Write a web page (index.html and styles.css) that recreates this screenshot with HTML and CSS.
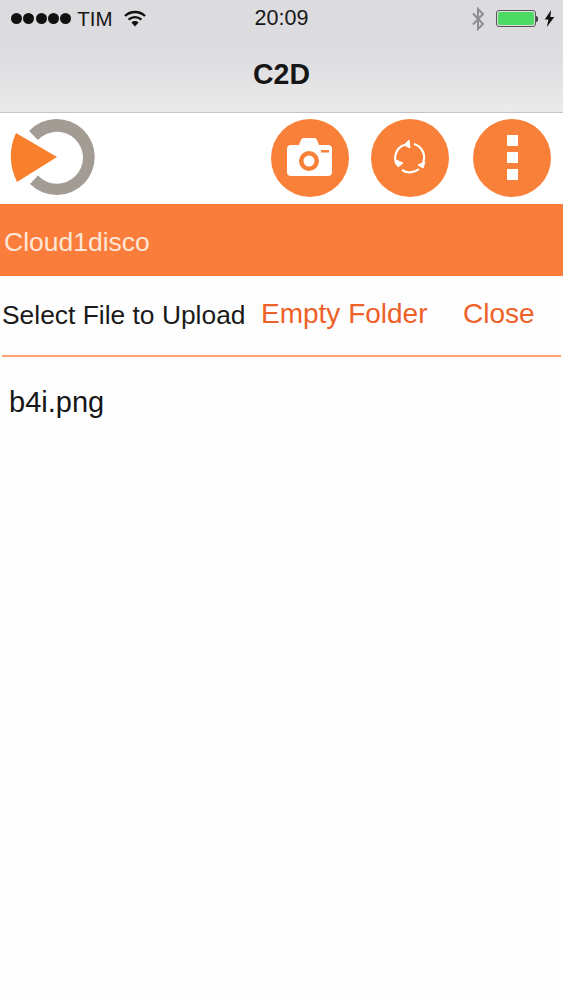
FILE: index.html
```html
<!DOCTYPE html>
<html>
  <head>
    <meta charset="UTF-8"/>
    <link rel="stylesheet" href="styles.css">
  </head>
  <body>
    <div id="topbar">
      <div class="status">
        <div class="status-left">
          <span class="signal"><i></i><i></i><i></i><i></i><i></i></span>
          <span class="carrier">TIM</span>
          <svg class="wifi" width="22" height="17" viewBox="0 0 22 17">
            <path d="M1 6a14.500 14.500 0 0 1 20 0" fill="none" stroke="#111" stroke-width="2.400"/>
            <path d="M4.600 9.600a9.400 9.400 0 0 1 12.800 0" fill="none" stroke="#111" stroke-width="2.400"/>
            <path d="M7.400 12.400a5.200 5.200 0 0 1 7.200 0L11 16.500z" fill="#111"/>
          </svg>
        </div>
        <div class="time">20:09</div>
        <div class="status-right">
          <svg class="bluetooth" width="14" height="24" viewBox="0 0 14 24">
            <path d="M2 6.500l10 10.500-5 5V2l5 5L2 17.500" fill="none" stroke="#8e8e90" stroke-width="2"/>
          </svg>
          <span class="battery"><b></b></span>
          <span class="nub"></span>
          <svg class="bolt" width="11" height="17" viewBox="0 0 10 16">
            <path d="M6.500 0L0.500 9h3.500L2.500 16l7-9.500H5.800z" fill="#111"/>
          </svg>
        </div>
      </div>
      <div class="title">C2D</div>
    </div>

    <div id="toolbar">
      <svg class="logo" width="90" height="82" viewBox="0 0 90 82">
        <path d="M24 13A38 38 0 1 1 25 66L33 57.500A26 26 0 1 0 33 22z" fill="#a39c94"/>
        <path d="M11 15L52 39 12 64Q0 39 11 15z" fill="#f8802c"/>
      </svg>
      <div class="tools">
        <div class="tool">
          <svg width="78" height="78" viewBox="0 0 78 78">
            <path d="M20 26h8l1.500-4q1-3 3-3h11q2 0 3 3l1.500 4h9q4 0 4 4v23q0 4-4 4H20q-4 0-4-4V30q0-4 4-4z" fill="#fff"/>
            <circle cx="38" cy="42" r="10" fill="#f98038"/>
            <circle cx="38" cy="42" r="5.500" fill="#fff"/>
            <rect x="50" y="31" width="8" height="2.500" fill="#f98038"/>
          </svg>
        </div>
        <div class="tool">
          <svg width="78" height="78" viewBox="0 0 78 78" fill="none" stroke="#fff" stroke-width="2.200">
            <path d="M43 25A14 14 0 0 1 52 44"/>
            <path d="M48 50A14 14 0 0 1 31 51"/>
            <path d="M26 46A14 14 0 0 1 33 26"/>
            <path d="M38 21L33 26 39 29z" fill="#fff" stroke-width="1"/>
            <path d="M47 46l5 3 2-6z" fill="#fff" stroke-width="1"/>
            <path d="M25 41l2 7 5-4z" fill="#fff" stroke-width="1"/>
          </svg>
        </div>
        <div class="tool dots"><i></i><i></i><i></i></div>
      </div>
    </div>

    <div id="folder">Cloud1disco</div>

    <div id="actions">
      <span class="select">Select File to Upload</span>
      <span class="empty">Empty Folder</span>
      <span class="close">Close</span>
    </div>

    <ol id="files">
      <li>b4i.png</li>
    </ol>
  </body>
</html>
```

FILE: styles.css
```css
html, body
{
  margin: 0;
  padding: 0;
}
body
{
  height: 1000px;
  overflow: hidden;
  font-family: "Liberation Sans", Arial, sans-serif;
  background: #fefefe;
  color: #161616;
}
#topbar
{
  height: 112px;
  border-bottom: 1px solid #c4c4c4;
  background: linear-gradient(#dcdbde, #dddce0 50%, #ebebeb);
}
.status
{
  height: 37px;
  display: flex;
  align-items: center;
  justify-content: space-between;
  position: relative;
  padding: 0 8px 0 11px;
}
.status-left,
.status-right
{
  display: flex;
  align-items: center;
}
.signal
{
  display: flex;
  gap: 1.300px;
}
.signal i
{
  width: 11px;
  height: 11px;
  border-radius: 50%;
  background: #111;
}
.carrier
{
  margin-left: 6px;
  font-size: 20.500px;
}
.wifi
{
  margin-left: 12px;
}
.time
{
  position: absolute;
  left: 0;
  right: 0;
  text-align: center;
  font-size: 21.500px;
}
.bluetooth
{
  margin-right: 11px;
}
.battery
{
  width: 40px;
  height: 17px;
  padding: 1px;
  border: 1px solid #555;
  border-radius: 3px;
  box-sizing: border-box;
  display: flex;
}
.battery b
{
  flex: 1;
  border-radius: 2px;
  background: #4cd964;
}
.nub
{
  width: 2px;
  height: 6px;
  margin-right: 6px;
  background: #444;
  border-radius: 0 2px 2px 0;
}
.title
{
  text-align: center;
  font-size: 29px;
  font-weight: bold;
  line-height: 28px;
  margin-top: 23px;
  transform: scaleX(.98);
}
#toolbar
{
  height: 89px;
  padding-bottom: 2px;
  display: flex;
  align-items: center;
  justify-content: space-between;
  padding-right: 12px;
  background: #fff;
}
.logo
{
  margin: 2px 0 0 5px;
}
.tools
{
  display: flex;
  gap: 23px;
}
.tool
{
  width: 78px;
  height: 78px;
  border-radius: 50%;
  background: #f98038;
}
.tool:nth-child(2)
{
  margin: 0 1px 0 -1px;
}
.tool svg
{
  display: block;
}
.dots
{
  display: flex;
  flex-direction: column;
  align-items: center;
  justify-content: center;
  gap: 6px;
}
.dots i
{
  width: 11px;
  height: 11px;
  background: #fff;
}
#folder
{
  height: 72px;
  line-height: 76px;
  padding-left: 4px;
  font-size: 26.500px;
  color: #fde6d8;
  background: #fb7d3b;
}
#actions
{
  height: 79px;
  margin: 0 2px;
  border-bottom: 2px solid #f8a273;
  display: flex;
  align-items: center;
  font-size: 26.400px;
}
.select
{
  width: 259px;
  color: #1a1a1a;
}
.empty
{
  width: 202px;
  font-size: 28px;
  padding-bottom: 3px;
  color: #ee6129;
}
.close
{
  font-size: 28px;
  padding-bottom: 3px;
  color: #ee6129;
}
#files
{
  list-style: none;
  margin: 0;
  padding: 28px 0 0 9px;
  font-size: 29px;
  line-height: 34px;
}
```
